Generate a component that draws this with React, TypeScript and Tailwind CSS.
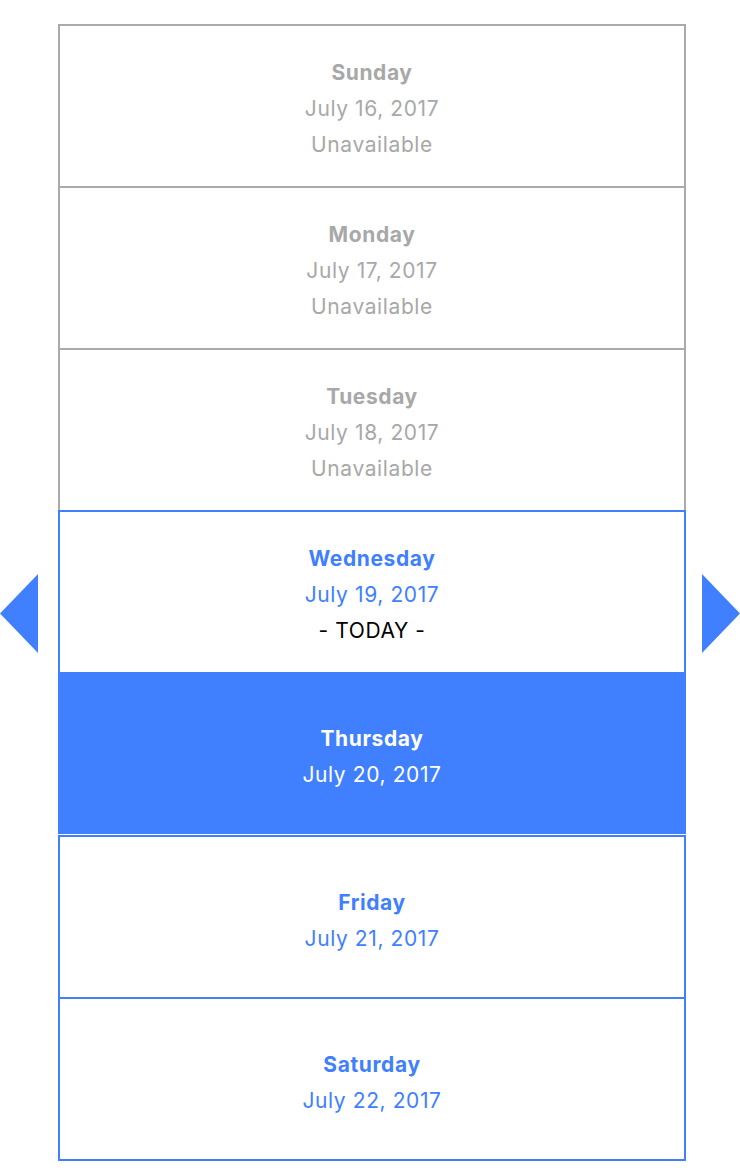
import React from "react";

type Day = {
  name: string;
  date: string;
  kind: "unavailable" | "today" | "selected" | "available";
};

const days: Day[] = [
  { name: "Sunday", date: "July 16, 2017", kind: "unavailable" },
  { name: "Monday", date: "July 17, 2017", kind: "unavailable" },
  { name: "Tuesday", date: "July 18, 2017", kind: "unavailable" },
  { name: "Wednesday", date: "July 19, 2017", kind: "today" },
  { name: "Thursday", date: "July 20, 2017", kind: "selected" },
  { name: "Friday", date: "July 21, 2017", kind: "available" },
  { name: "Saturday", date: "July 22, 2017", kind: "available" },
];

function Cell({ d, first }: { d: Day; first: boolean }) {
  if (d.kind === "selected") {
    return (
      <div className="relative z-20 -mt-[2px] flex h-[162px] flex-col items-center justify-center bg-[#4080ff] pt-[8px] text-white">
        <div className="font-bold leading-[36px]">{d.name}</div>
        <div className="leading-[36px]">{d.date}</div>
      </div>
    );
  }
  if (d.kind === "available") {
    return (
      <div
        className={
          "relative z-10 flex h-[164px] flex-col items-center justify-center border-2 border-[#4080ff] pt-[8px] text-[#4080ff] " +
          (d.name === "Friday" ? "mt-[1px]" : "-mt-[2px]")
        }
      >
        <div className="font-bold leading-[36px]">{d.name}</div>
        <div className="leading-[36px]">{d.date}</div>
      </div>
    );
  }
  if (d.kind === "today") {
    return (
      <div className="relative z-10 -mt-[2px] flex h-[164px] flex-col items-center justify-center border-2 border-[#4080ff] pt-[6px]">
        <div className="font-bold leading-[36px] text-[#4080ff]">{d.name}</div>
        <div className="leading-[36px] text-[#4080ff]">{d.date}</div>
        <div className="leading-[36px] text-black">- TODAY -</div>
      </div>
    );
  }
  return (
    <div
      className={
        "flex h-[164px] flex-col items-center justify-center border-2 border-[#aaaaaa] pt-[6px] text-[#a8a8a8] " +
        (first ? "" : "-mt-[2px]")
      }
    >
      <div className="font-bold leading-[36px]">{d.name}</div>
      <div className="leading-[36px]">{d.date}</div>
      <div className="leading-[36px]">Unavailable</div>
    </div>
  );
}

export default function App() {
  return (
    <div
      className="flex w-[740px] bg-white pt-[24px] text-[21px] tracking-[0.6px]"
      style={{ fontFamily: "Inter, 'Noto Sans', sans-serif" }}
    >
      <button className="mt-[550px] self-start" aria-label="Previous">
        <svg width="38" height="79" viewBox="0 0 38 79" className="block">
          <polygon points="0,39.5 38,0 38,79" fill="#4080ff" />
        </svg>
      </button>
      <div className="ml-[20px] w-[628px] flex-none pb-[13px]">
        {days.map((d, i) => (
          <Cell key={d.name} d={d} first={i === 0} />
        ))}
      </div>
      <button className="ml-[16px] mt-[550px] self-start" aria-label="Next">
        <svg width="38" height="79" viewBox="0 0 38 79" className="block">
          <polygon points="38,39.5 0,0 0,79" fill="#4080ff" />
        </svg>
      </button>
    </div>
  );
}
